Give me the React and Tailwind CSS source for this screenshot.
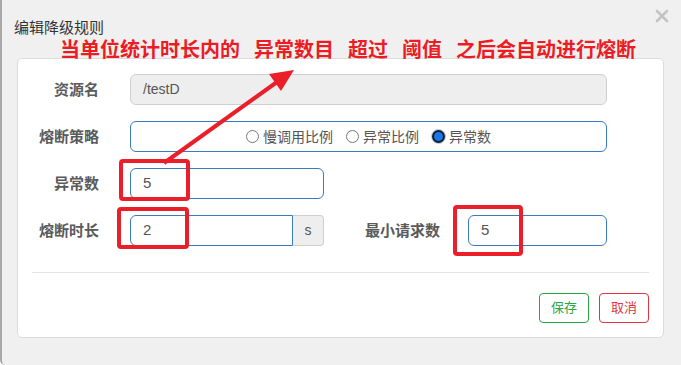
import React from "react";

const cjk = { fontFamily: '"Liberation Sans", "Noto Sans CJK SC", sans-serif' };

function Radio({ checked, label }) {
  return (
    <span className="flex items-center">
      {checked ? (
        <span className="inline-block w-[13px] h-[13px] rounded-full border-[2px] border-[#1c1c1c] bg-[#1677ee] shadow-[0_0_0_1px_#a9cff5]"></span>
      ) : (
        <span className="inline-block w-[13px] h-[13px] rounded-full border border-[#777] bg-white"></span>
      )}
      <span className="ml-[4px] text-[14px] leading-[20px] text-[#555]">{label}</span>
    </span>
  );
}

function Label({ children, w = "w-[81px]" }) {
  return (
    <div className={`${w} shrink-0 text-right text-[15px] font-bold text-[#5a5a5a] leading-[20px]`}>{children}</div>
  );
}

export default function App() {
  return (
    <div
      className="relative w-[681px] h-[365px] bg-[#f0f0f0] border-l-2 border-[#a9a9a9] rounded-bl-[5px] overflow-hidden"
      style={cjk}
    >
      <div className="pl-[12px] pt-[18px] h-[40px] text-[15px] leading-[20px] text-[#333]">编辑降级规则</div>

      <div className="ml-[15px] mt-[18px] w-[647px] h-[280px] bg-white border border-[#dcdcdc] rounded-[5px] pt-[15px]">
        <div className="flex flex-col gap-[16px]">
          <div className="flex items-center h-[31px]">
            <Label>资源名</Label>
            <div className="ml-[31px] w-[477px] h-[31px] rounded-[6px] border border-[#cfcfcf] bg-[#eeeeee] flex items-center pl-[12px] text-[14px] text-[#555]">
              /testD
            </div>
          </div>
          <div className="flex items-center h-[31px]">
            <Label>熔断策略</Label>
            <div className="ml-[31px] w-[477px] h-[31px] rounded-[6px] border border-[#3a7bbf] bg-white flex items-center justify-center gap-[13px]">
              <Radio label="慢调用比例" />
              <Radio label="异常比例" />
              <Radio checked label="异常数" />
            </div>
          </div>
          <div className="flex items-center h-[31px]">
            <Label>异常数</Label>
            <div className="ml-[31px] w-[194px] h-[31px] rounded-[6px] border border-[#3a7bbf] bg-white flex items-center pl-[12px] text-[15px] text-[#555]">
              5
            </div>
          </div>
          <div className="flex items-center h-[31px]">
            <Label>熔断时长</Label>
            <div className="ml-[31px] w-[194px] h-[31px] flex">
              <div className="w-[163px] h-[31px] rounded-l-[6px] border border-[#3a7bbf] bg-white flex items-center pl-[12px] text-[15px] text-[#555]">
                2
              </div>
              <div className="w-[31px] h-[31px] rounded-r-[4px] border border-l-0 border-[#cfcfcf] bg-[#eeeeee] flex items-center justify-center text-[14px] text-[#555]">
                s
              </div>
            </div>
            <Label w="w-[116px]">最小请求数</Label>
            <div className="ml-[28px] w-[139px] h-[31px] rounded-[6px] border border-[#3a7bbf] bg-white flex items-center pl-[12px] text-[15px] text-[#555]">
              5
            </div>
          </div>
        </div>

        <div className="ml-[14px] mt-[26px] w-[617px] h-px bg-[#e3e3e3]"></div>

        <div className="flex justify-end gap-[10px] mr-[14px] mt-[20px]">
          <button className="w-[50px] h-[30px] rounded-[4px] border border-[#28a745] text-[#28a745] text-[13px] bg-white">保存</button>
          <button className="w-[50px] h-[30px] rounded-[4px] border border-[#dc3545] text-[#dc3545] text-[13px] bg-white">取消</button>
        </div>
      </div>

      {/* close icon */}
      <svg className="absolute left-[652px] top-[8px]" width="16" height="16" viewBox="0 0 16 16">
        <path d="M3 3 L13 13 M13 3 L3 13" stroke="#c4c4c4" strokeWidth="2.6" strokeLinecap="round" />
      </svg>

      {/* annotation */}
      <div
        className="absolute left-[58px] top-[37px] flex gap-[14px] text-[20px] leading-[24px] font-bold text-[#ec1c24] whitespace-nowrap"
        style={{ fontFamily: '"Noto Sans CJK SC", sans-serif' }}
      >
        <span>当单位统计时长内的</span>
        <span>异常数目</span>
        <span>超过</span>
        <span>阈值</span>
        <span>之后会自动进行熔断</span>
      </div>

      <svg className="absolute left-[-2px] top-0 pointer-events-none" width="681" height="365" viewBox="0 0 681 365">
        <g fill="none" stroke="#ea1f29" strokeWidth="4">
          <rect x="121" y="161" width="67" height="38" rx="2" />
          <rect x="119" y="209" width="68" height="38" rx="2" />
          <rect x="455" y="207" width="66" height="47" rx="2" />
          <line x1="164" y1="163" x2="277" y2="82" />
        </g>
        <polygon points="294,70 281,91 269,74" fill="#ea1f29" />
      </svg>
    </div>
  );
}
